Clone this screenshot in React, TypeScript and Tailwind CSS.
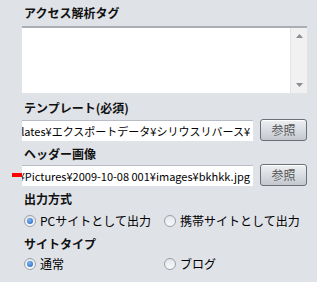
import React from 'react';

const font = { fontFamily: '"Noto Sans CJK JP", "Liberation Sans", sans-serif' };

const Label: React.FC<{ children: React.ReactNode }> = ({ children }) => (
  <div className="h-[14px] pl-[2px] text-[12px] leading-[14px] font-bold text-[#111]">{children}</div>
);

const PathField: React.FC<{ value: string }> = ({ value }) => (
  <div className="flex h-[21px] w-[231px] items-center justify-end overflow-hidden border-t border-[#b8bcc4] bg-white pr-[3px]">
    <span className="whitespace-nowrap text-[11px] leading-[14px] text-black">{value}</span>
  </div>
);

const BrowseButton = () => (
  <button className="flex h-[22px] w-[47px] items-center justify-center rounded-[3px] border border-[#6a6f78] bg-gradient-to-b from-[#eef0f3] via-[#d9dce1] to-[#c4c8ce] text-[12px] text-[#555] shadow-[inset_0_1px_0_#fff]">
    参照
  </button>
);

const Radio: React.FC<{ checked?: boolean; label: string }> = ({ checked, label }) => (
  <label className="flex items-center gap-[4px] text-[12px] leading-[14px] text-black">
    <span className="flex h-[12px] w-[12px] items-center justify-center rounded-full border border-[#9aa0a8] bg-gradient-to-b from-[#e4e6ea] to-[#fafafa]">
      {checked && <span className="h-[6px] w-[6px] rounded-full bg-[radial-gradient(circle_at_40%_35%,#7fb6f0,#1c5fb8)]" />}
    </span>
    {label}
  </label>
);

export default function App() {
  return (
    <div className="h-[282px] w-[317px] overflow-hidden bg-[#dfe2e7] pl-[22px] pt-[6px]" style={font}>
      <Label>アクセス解析タグ</Label>
      <div className="mt-[6px] flex h-[67px] w-[285px] border-t-2 border-[#a9adb4] bg-white">
        <div className="flex-1" />
        <div className="flex w-[17px] flex-col items-center justify-between border-l border-[#e2e3e6] bg-[#f1f1f1] py-[6px]">
          <svg width="7" height="4" viewBox="0 0 7 4"><path d="M3.5 0L7 4H0z" fill="#8a8d92" /></svg>
          <svg width="7" height="4" viewBox="0 0 7 4"><path d="M0 0h7L3.5 4z" fill="#8a8d92" /></svg>
        </div>
      </div>

      <div className="mt-[8px]">
        <Label>テンプレート(必須)</Label>
      </div>
      <div className="mt-[4px] flex items-center gap-[7px]">
        <PathField value="C:¥Users¥siriususer¥Documents¥Templates¥エクスポートデータ¥シリウスリバース¥" />
        <BrowseButton />
      </div>

      <div className="mt-[6px]">
        <Label>ヘッダー画像</Label>
      </div>
      <div className="relative mt-[3px] flex items-center gap-[7px]">
        <div className="absolute left-[-10px] top-[9px] h-[4px] w-[10px] bg-[#ff0000]" />
        <PathField value="C:¥Users¥siriususer¥Pictures¥2009-10-08 001¥images¥bkhkk.jpg" />
        <BrowseButton />
      </div>

      <div className="mt-[6px]">
        <Label>出力方式</Label>
      </div>
      <div className="mt-[8px] flex pl-[2px]">
        <div className="w-[140px]">
          <Radio checked label="PCサイトとして出力" />
        </div>
        <Radio label="携帯サイトとして出力" />
      </div>

      <div className="mt-[9px]">
        <Label>サイトタイプ</Label>
      </div>
      <div className="mt-[6px] flex pl-[2px]">
        <div className="w-[140px]">
          <Radio checked label="通常" />
        </div>
        <Radio label="ブログ" />
      </div>
    </div>
  );
}
